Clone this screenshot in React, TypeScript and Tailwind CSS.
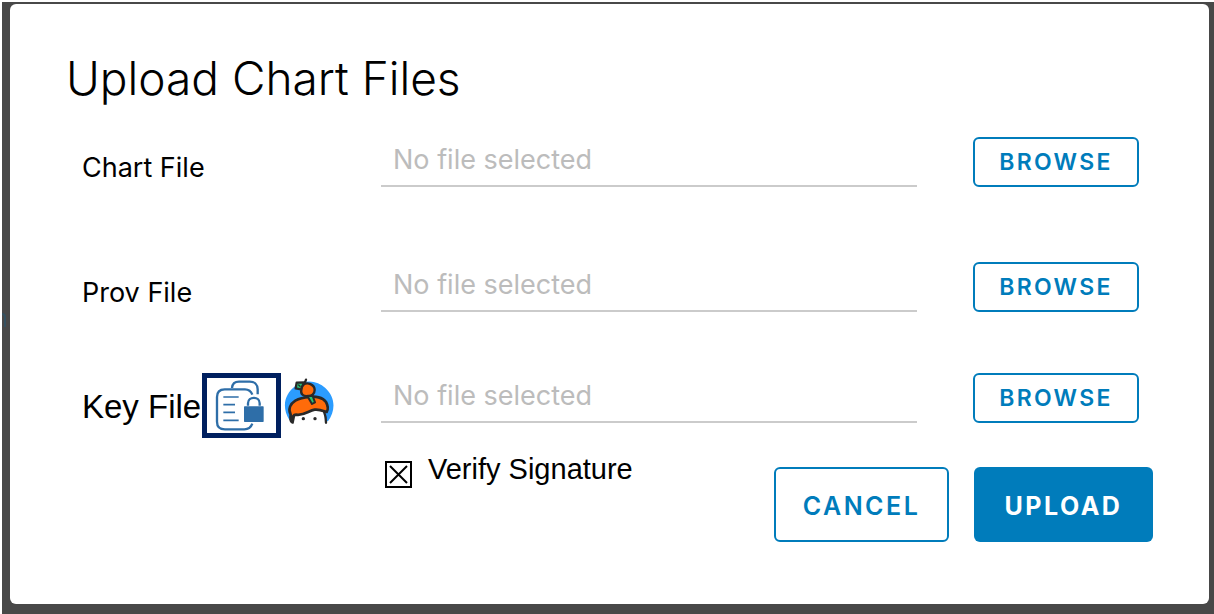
import { useState } from "react";
import type { ReactNode } from "react";

function LockedFilesIcon() {
  return (
    <svg viewBox="22 23 207 165" className="h-[55px] w-[69px]" fill="none" stroke="#2e6ea8" strokeWidth="7" aria-hidden="true">
      <path d="M97 53 C98 41 106 34 118 34 H150 C165 34 174 43 174 57 V72" />
      <path d="M158 73 C154 62 146 57 136 57 H75 C60 57 52 66 52 80 V154 C52 169 61 177 76 177 H134 C146 177 154 171 158 160" />
      <path d="M71 80 H117 M71 103 H106 M71 126 H106 M71 150 H117" strokeWidth="5" />
      <path d="M145 106 V99 C145 77 180 77 180 99 V106" />
      <rect x="133" y="108" width="59" height="47" rx="2" fill="#2e6ea8" stroke="none" />
    </svg>
  );
}

function MascotIcon() {
  return (
    <svg viewBox="6 12 150 138" className="h-[46px] w-[50px]" aria-hidden="true">
      <path d="M22 138 C-2 98 8 60 40 36 C68 16 106 18 130 42 C160 70 162 108 138 142 Z" fill="#2b9cff" />
      <path d="M30 148 L34 122 L92 98 L122 106 L132 148 Z" fill="#fff" />
      <path
        d="M26 122 C18 106 24 90 40 80 C54 72 66 70 82 69 C100 66 122 70 132 84 C138 95 139 106 134 114 C122 110 110 105 98 107 C80 110 66 126 42 122 C36 122 30 128 29 144 C24 138 25 130 26 122 Z"
        fill="#ff6b0a"
        stroke="#292929"
        strokeWidth="8"
        strokeLinejoin="round"
      />
      <path d="M36 126 L32 146 M126 112 C130 122 132 132 132 146" fill="none" stroke="#292929" strokeWidth="7" strokeLinecap="round" />
      <path d="M63 33 C76 22 98 32 98 48 C98 61 88 67 78 66 C64 68 55 60 58 48 C58 41 58 37 63 33 Z" fill="#ff6b0a" stroke="#292929" strokeWidth="7" />
      <path d="M72 17 L68 28" stroke="#292929" strokeWidth="7" strokeLinecap="round" />
      <path d="M44 26 L67 25 L61 36 L57 46 L41 43 Z" fill="#25c477" stroke="#292929" strokeWidth="7" strokeLinejoin="round" />
      <path d="M50 33 L54 37" stroke="#292929" strokeWidth="4" strokeLinecap="round" />
      <path d="M76 66 L92 66 L99 85 L90 90 L83 78 Z" fill="#25c477" stroke="#292929" strokeWidth="6" strokeLinejoin="round" />
      <circle cx="64" cy="134" r="5" fill="#292929" />
      <circle cx="99" cy="134" r="5" fill="#292929" />
    </svg>
  );
}

type FileRowProps = { id: string; label: ReactNode };

function FileRow({ id, label }: FileRowProps) {
  return (
    <div className="grid grid-cols-[299px_minmax(0,1fr)_166px] items-start pr-[14px] pl-4">
      {label}
      <input
        id={id}
        type="text"
        readOnly
        placeholder="No file selected"
        className="mr-14 h-[50px] min-w-0 border-b-2 border-[#cbcbcb] bg-transparent px-3 pb-1 text-[27px] outline-none placeholder:text-[#bcbcbc]"
      />
      <button
        type="button"
        className="h-[50px] rounded-md border-2 border-[#007cbb] pt-px text-[23px] font-semibold tracking-widest text-[#007cbb]"
      >
        BROWSE
      </button>
    </div>
  );
}

export default function App() {
  const [verify, setVerify] = useState(true);

  return (
    <div className="flex min-h-screen bg-white pt-[2px] pl-[2px] font-['Inter',sans-serif] text-black">
      <div className="relative flex flex-1 bg-[#484848] pt-[2px] pr-[5px] pb-[10px] pl-2">
        <div aria-hidden="true" className="absolute top-[311px] left-0 h-[14px] w-1 rounded-tr border-t-2 border-r-2 border-[#35505f]" />
        <form
          role="dialog"
          aria-labelledby="upload-title"
          onSubmit={(e) => e.preventDefault()}
          className="flex-1 rounded-md bg-white px-14 pt-12"
        >
          <h1 id="upload-title" className="text-[46px] leading-[52px] font-light">
            Upload Chart Files
          </h1>

          <div className="pt-[33px]">
            <FileRow
              id="chart-file"
              label={<label htmlFor="chart-file" className="pt-[13px] text-[27px] leading-9">Chart File</label>}
            />
          </div>
          <div className="pt-[75px]">
            <FileRow
              id="prov-file"
              label={<label htmlFor="prov-file" className="pt-[13px] text-[27px] leading-9">Prov File</label>}
            />
          </div>
          <div className="pt-[61px]">
            <FileRow
              id="key-file"
              label={
                <div className="flex items-center font-['Liberation_Sans',sans-serif] text-[33px]">
                  <label htmlFor="key-file" className="pt-[2px] whitespace-nowrap">Key File</label>
                  <span className="ml-px flex shrink-0 border-5 border-[#00205f]">
                    <LockedFilesIcon />
                  </span>
                  <span className="ml-[3px] shrink-0 self-start pt-[5px]">
                    <MascotIcon />
                  </span>
                </div>
              }
            />
          </div>

          <div className="flex items-start pt-[15px] pl-[319px]">
            <label className="flex items-start gap-4 font-['Liberation_Sans',sans-serif] text-[29px] leading-8 whitespace-nowrap">
              <span className="grid pt-2">
                <input
                  type="checkbox"
                  checked={verify}
                  onChange={(e) => setVerify(e.target.checked)}
                  className="peer col-start-1 row-start-1 size-[27px] appearance-none border-2 border-black"
                />
                <svg
                  viewBox="0 0 27 27"
                  className="pointer-events-none invisible col-start-1 row-start-1 size-[27px] peer-checked:visible"
                  stroke="#000"
                  strokeWidth="2"
                  aria-hidden="true"
                >
                  <path d="M5 5 L22 22 M22 5 L5 22" />
                </svg>
              </span>
              Verify Signature
            </label>
            <div className="ml-auto flex gap-[25px] pt-[14px]">
              <button
                type="button"
                className="h-[75px] w-[175px] rounded-md border-2 border-[#007cbb] pt-1 text-[25px] font-semibold tracking-widest text-[#007cbb]"
              >
                CANCEL
              </button>
              <button
                type="submit"
                className="h-[75px] w-[179px] rounded-md bg-[#007cbb] pt-1 text-[25px] font-bold tracking-widest text-white"
              >
                UPLOAD
              </button>
            </div>
          </div>
        </form>
      </div>
    </div>
  );
}
